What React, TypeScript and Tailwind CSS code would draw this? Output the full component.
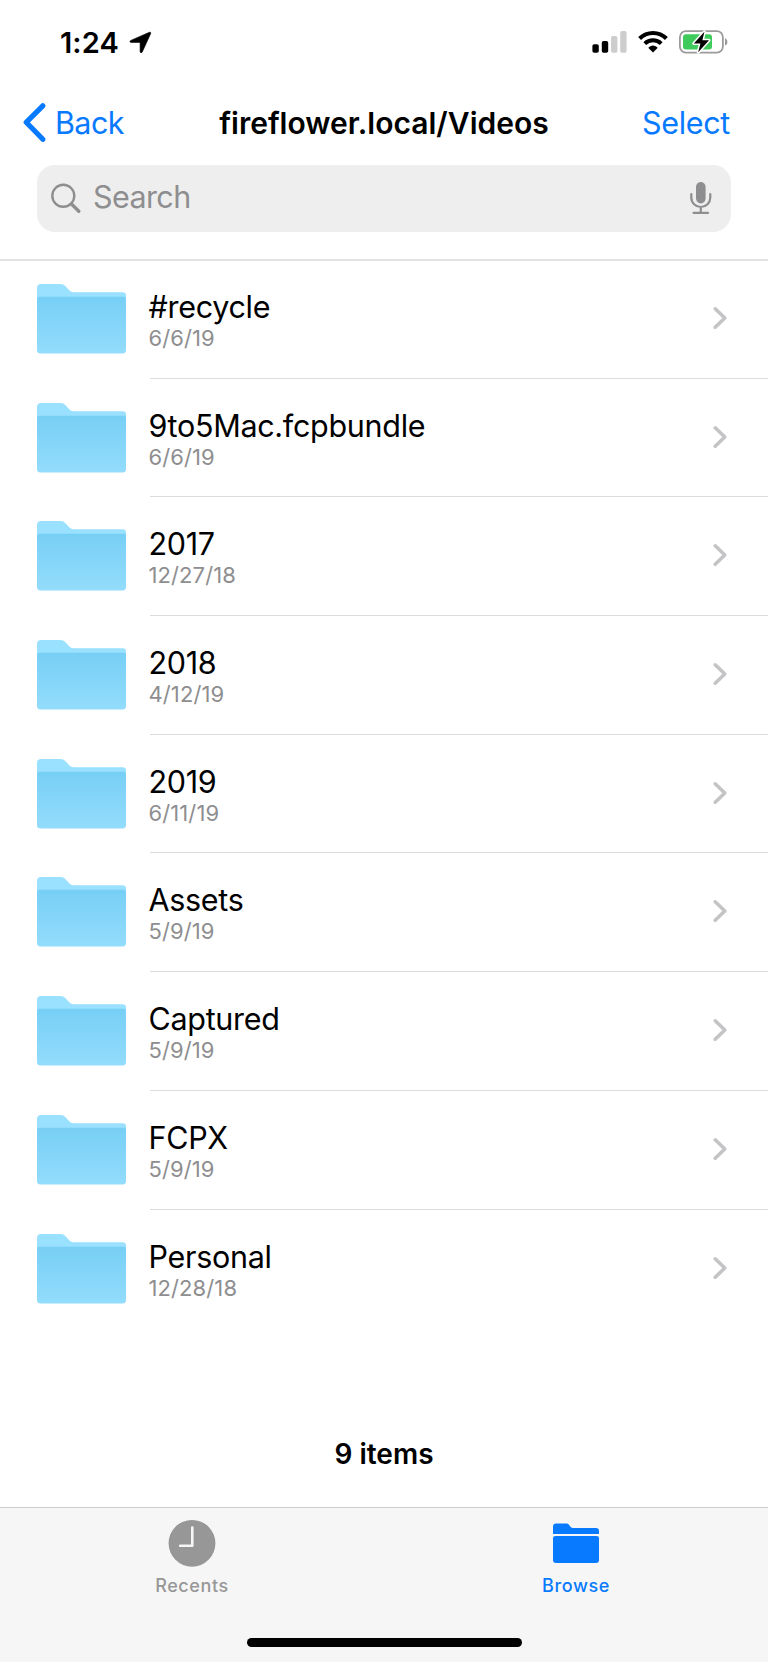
const folders = [
  { name: "#recycle", date: "6/6/19" },
  { name: "9to5Mac.fcpbundle", date: "6/6/19" },
  { name: "2017", date: "12/27/18" },
  { name: "2018", date: "4/12/19" },
  { name: "2019", date: "6/11/19" },
  { name: "Assets", date: "5/9/19" },
  { name: "Captured", date: "5/9/19" },
  { name: "FCPX", date: "5/9/19" },
  { name: "Personal", date: "12/28/18" },
];

const LocationIcon = () => (
  <svg width="23" height="24" viewBox="0 0 23 24">
    <path
      d="M20.4 1.3 1.8 9.4c-1.3.6-1 2 .3 2h8.3c.5 0 .7.2.7.7v8.4c0 1.4 1.6 1.7 2.2.4L21.7 2.5c.4-.9-.4-1.6-1.3-1.2z"
      fill="#000"
      stroke="#000"
      strokeWidth="0.6"
    />
  </svg>
);

const SignalIcon = () => (
  <svg width="36" height="24" viewBox="0 0 36 24">
    <rect x="0.4" y="14.3" width="6.4" height="8.4" rx="1.8" fill="#000" />
    <rect x="9.8" y="11" width="6.4" height="11.7" rx="1.8" fill="#000" />
    <rect x="19" y="6" width="6.4" height="16.7" rx="1.8" fill="#cdcdcd" />
    <rect x="28.2" y="1" width="6.4" height="21.7" rx="1.8" fill="#cdcdcd" />
  </svg>
);

const WifiIcon = () => (
  <svg width="30" height="24" viewBox="0 0 30 24" fill="none" stroke="#000">
    <path d="M1.6 8.4a19.3 19.3 0 0 1 26.8 0" strokeWidth="4.2" />
    <path d="M6.8 13.6a12 12 0 0 1 16.4 0" strokeWidth="4" />
    <path
      d="M15 22.6 10.7 18.3c-.3-.4-.3-.7.1-1a6.6 6.6 0 0 1 8.4 0c.4.3.4.6.1 1z"
      fill="#000"
      stroke="none"
    />
  </svg>
);

const BatteryIcon = () => (
  <svg width="50" height="28" viewBox="0 0 50 28">
    <rect x="0.9" y="3.2" width="43" height="21.4" rx="6" fill="none" stroke="#9b9b9b" strokeWidth="1.8" />
    <path d="M46 10.2c3.2 1 3.2 6.4 0 7.4z" fill="#9b9b9b" />
    <rect x="4" y="6.2" width="29" height="15.4" rx="3" fill="#3ecb5c" />
    <path
      d="M25.4 3.8 14.8 15.6h6.600l-2.200 8.600L30 12.300h-6.600z"
      fill="#000"
      stroke="#fff"
      strokeWidth="3"
      strokeLinejoin="round"
      paintOrder="stroke"
    />
  </svg>
);

const FolderIcon = () => (
  <svg width="89" height="70" viewBox="0 0 89 70">
    <defs>
      <linearGradient id="folderFront" x1="0" y1="0" x2="0" y2="1">
        <stop offset="0" stopColor="#77cff5" />
        <stop offset="1" stopColor="#93dcfc" />
      </linearGradient>
    </defs>
    <path
      d="M0 4.2Q0 0 4.2 0H23.500q3 0 4.800 2l3.900 4.300q1.700 1.900 4.400 1.900H85.500Q89 8.200 89 11.500V25H0z"
      fill="#9ae0ff"
    />
    <path
      d="M0 15q0-2.200 2.200-2.200H86.800Q89 12.800 89 15V66q0 3.400-3.400 3.400H3.400Q0 69.400 0 66z"
      fill="url(#folderFront)"
    />
  </svg>
);

const StatusBar = () => (
  <div className="flex h-21 items-start justify-between pt-7 pr-[39px] pl-[60px]">
    <div className="flex items-center gap-2.5">
      <span className="text-[29px] leading-[30px] font-semibold tracking-[0.1px]">1:24</span>
      <LocationIcon />
    </div>
    <div className="flex items-center">
      <SignalIcon />
      <span className="ml-2.5">
        <WifiIcon />
      </span>
      <span className="ml-[11px]">
        <BatteryIcon />
      </span>
    </div>
  </div>
);

const NavBar = () => (
  <div className="grid h-[81px] grid-cols-[1fr_auto_1fr] items-start px-[38px] pt-5">
    <div className="-mt-px -ml-[15px] flex items-center gap-[9px] text-[#087aff]">
      <svg width="23" height="40" viewBox="0 0 23 40" fill="none">
        <path
          d="M19.800 2.800 3.200 19.300 19.800 36.300"
          stroke="currentColor"
          strokeWidth="5.200"
          strokeLinecap="round"
          strokeLinejoin="round"
        />
      </svg>
      <span className="text-[30.5px] leading-9 tracking-[-0.6px]">Back</span>
    </div>
    <h1 className="text-[30px] leading-[38px] font-semibold">fireflower.local/Videos</h1>
    <span className="justify-self-end text-[30.5px] leading-[38px] tracking-[-0.3px] text-[#087aff]">
      Select
    </span>
  </div>
);

const SearchBar = () => (
  <div className="mx-[37px] flex h-[67px] items-center rounded-[18px] bg-[#eeeeee] pr-[19px] pl-[13px] text-[#8e8e90]">
    <svg width="32" height="32" viewBox="0 0 32 32" fill="none" stroke="currentColor">
      <circle cx="13.300" cy="12.800" r="11" strokeWidth="2.400" />
      <path d="m21.500 21 7.300 7.300" strokeWidth="3.400" strokeLinecap="round" />
    </svg>
    <span className="ml-[11px] flex-1 pb-[3px] text-[30.5px] leading-9 tracking-[-0.6px]">
      Search
    </span>
    <svg className="mb-0.5" width="22" height="34" viewBox="0 0 22 34" fill="none" stroke="currentColor">
      <rect x="6" y="1" width="9.600" height="21.400" rx="4.800" fill="currentColor" stroke="none" />
      <path
        d="M1.300 13v3.500a9.500 9.500 0 0 0 19 0V13M10.800 26v6M3.500 31.800h14.600"
        strokeWidth="2.200"
        strokeLinecap="round"
      />
    </svg>
  </div>
);

const FolderRow = ({ name, date, last }: { name: string; date: string; last: boolean }) => (
  <li className="flex h-[118.7px] pl-[37px]">
    <div className="w-[113px] pt-6">
      <FolderIcon />
    </div>
    <div
      className={`flex flex-1 items-start justify-between pr-10 ${last ? "" : "border-b border-[#dcdcdc]"}`}
    >
      <div className="-ml-[1.5px] pt-7">
        <p className="text-[30.5px] leading-[37px] tracking-[-0.3px]">{name}</p>
        <p className="text-[22px] leading-[27px] tracking-[0.1px] text-[#8e8e90]">{date}</p>
      </div>
      <svg className="mt-[45px]" width="16" height="26" viewBox="0 0 16 26" fill="none">
        <path
          d="m3.200 3.800 9.600 9.200-9.600 9.200"
          stroke="#c4c4c6"
          strokeWidth="3.600"
          strokeLinecap="round"
          strokeLinejoin="round"
        />
      </svg>
    </div>
  </li>
);

const TabBar = () => (
  <footer className="flex h-[155px] flex-col items-center border-t border-[#cbcbcb] bg-[#f6f6f6]">
    <nav className="grid w-full grid-cols-2 justify-items-center">
      <div className="flex flex-col items-center pt-[11px] text-[#979797]">
        <svg width="48" height="48" viewBox="0 0 48 48">
          <circle cx="24" cy="24.300" r="23.400" fill="currentColor" />
          <path
            d="M24.300 8.500V26.700H12.200"
            fill="none"
            stroke="#f6f6f6"
            strokeWidth="2.600"
            strokeLinecap="round"
            strokeLinejoin="round"
          />
        </svg>
        <span className="mt-[7px] text-[18px] leading-6 font-medium tracking-[0.6px]">Recents</span>
      </div>
      <div className="flex flex-col items-center pt-[11px] text-[#087aff]">
        <svg width="48" height="48" viewBox="0 0 48 48" fill="currentColor">
          <path d="M1 15V7.500q0-3 3-3H14.500q1.500 0 2.500 1.300L18.200 7.500q1 1.400 2.600 1.400H44q3 0 3 3V15z" />
          <path d="M1 19.300q0-2.300 2.300-2.300H44.700Q47 17 47 19.300V40.900q0 3-3 3H4q-3 0-3-3z" />
        </svg>
        <span className="mt-[7px] text-[18px] leading-6 font-medium tracking-[0.6px]">Browse</span>
      </div>
    </nav>
    <div className="mt-10 h-[9px] w-[275px] rounded-full bg-black" />
  </footer>
);

export default function App() {
  return (
    <div className="flex h-[1662px] w-[768px] flex-col overflow-hidden bg-white font-['Inter',sans-serif] text-black">
      <header className="h-[261px] border-b-2 border-[#e2e2e2]">
        <StatusBar />
        <NavBar />
        <SearchBar />
      </header>
      <main className="flex-1">
        <ul className="-mt-px">
          {folders.map((folder, i) => (
            <FolderRow key={folder.name} {...folder} last={i === folders.length - 1} />
          ))}
        </ul>
        <p className="mt-[108px] text-center text-[28px] leading-9 font-semibold">
          {folders.length} items
        </p>
      </main>
      <TabBar />
    </div>
  );
}
